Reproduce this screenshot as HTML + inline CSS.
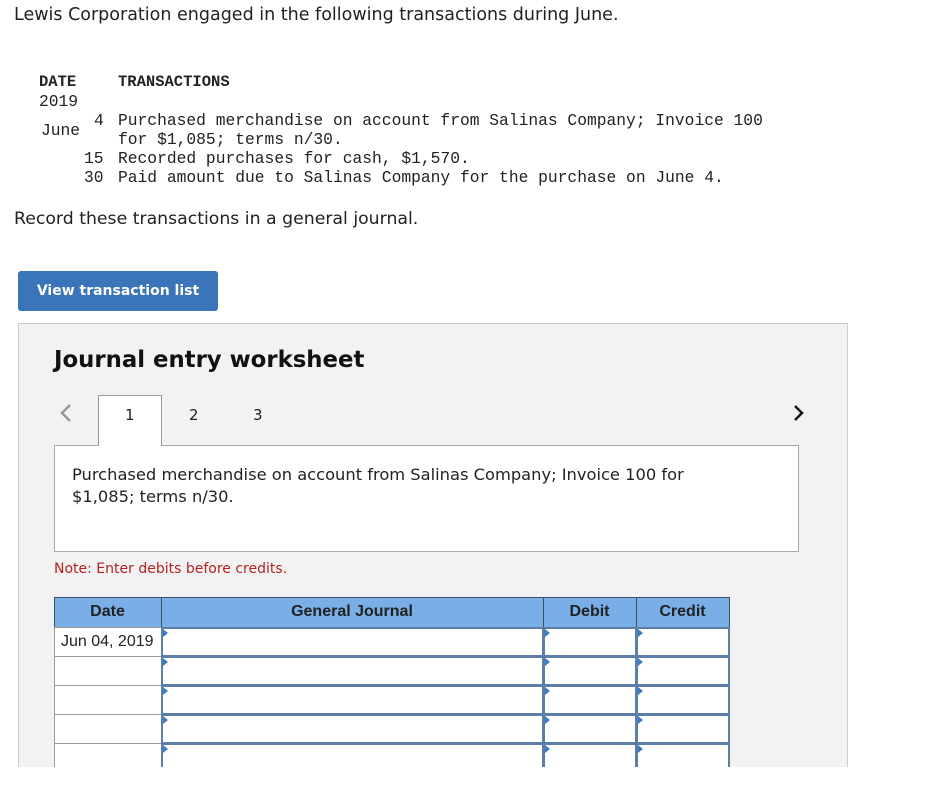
<!DOCTYPE html>
<html><head><meta charset="utf-8"><style>
*{margin:0;padding:0;box-sizing:border-box}
body{width:927px;height:791px;background:#fff;position:relative;overflow:hidden;font-family:"Liberation Sans",sans-serif;color:#222}
.a{position:absolute;white-space:nowrap}
.m{font-family:"Liberation Mono",monospace;font-size:16.3px;color:#222}
.s{font-family:"DejaVu Sans","Liberation Sans",sans-serif}
.cell{position:absolute;background:#fff;border:1px solid #6a8bb0}
.tri{position:absolute;width:0;height:0;border-top:4px solid transparent;border-bottom:4px solid transparent;border-left:5px solid #3d7cc4}
</style></head><body>
<div class="a s" style="left:14px;top:5px;font-size:17.5px">Lewis Corporation engaged in the following transactions during June.</div>
<div class="a m" style="left:39px;top:73px;font-weight:bold;font-size:15.5px">DATE</div>
<div class="a m" style="left:118px;top:73px;font-weight:bold;font-size:15.5px">TRANSACTIONS</div>
<div class="a m" style="left:39px;top:92px">2019</div>
<div class="a m" style="left:41px;top:121px">June</div>
<div class="a m" style="left:94px;top:111px">4</div>
<div class="a m" style="left:118px;top:111px">Purchased merchandise on account from Salinas Company; Invoice 100</div>
<div class="a m" style="left:118px;top:130px">for $1,085; terms n/30.</div>
<div class="a m" style="left:84px;top:149px">15</div>
<div class="a m" style="left:118px;top:149px">Recorded purchases for cash, $1,570.</div>
<div class="a m" style="left:84px;top:168px">30</div>
<div class="a m" style="left:118px;top:168px">Paid amount due to Salinas Company for the purchase on June 4.</div>
<div class="a s" style="left:14px;top:209px;font-size:17.3px">Record these transactions in a general journal.</div>
<div class="a s" style="left:18px;top:271px;width:200px;height:40px;background:#3a74b9;border-radius:3px;color:#fff;font-weight:bold;font-size:14px;line-height:40px;text-align:center">View transaction list</div>
<div class="a" style="left:18px;top:323px;width:830px;height:460px;background:#f2f2f2;border:1px solid #ccc"></div>
<div class="a s" style="left:54px;top:347px;font-size:22.8px;font-weight:bold;color:#111">Journal entry worksheet</div>
<svg class="a" style="left:58px;top:403px" width="16" height="20"><path d="M12 2 L4 10 L12 18" fill="none" stroke="#999" stroke-width="2.5"/></svg>
<svg class="a" style="left:792px;top:403px" width="16" height="20"><path d="M3 3 L10 10 L3 17" fill="none" stroke="#111" stroke-width="2.5"/></svg>
<div class="a" style="left:54px;top:445px;width:745px;height:107px;background:#fff;border:1px solid #aaa"></div>
<div class="a" style="left:98px;top:395px;width:64px;height:51px;background:#fff;border:1px solid #999;border-bottom:none"></div>
<div class="a s" style="left:125px;top:406px;font-size:15px">1</div>
<div class="a s" style="left:189px;top:406px;font-size:15px">2</div>
<div class="a s" style="left:253px;top:406px;font-size:15px">3</div>
<div class="a s" style="left:72px;top:464px;font-size:16.3px;line-height:22px">Purchased merchandise on account from Salinas Company; Invoice 100 for<br>$1,085; terms n/30.</div>
<div class="a s" style="left:54px;top:561px;font-size:14px;color:#b22222">Note: Enter debits before credits.</div>
<div class="a" style="left:54px;top:597px;width:676px;height:31px;background:#79aee6;border:1px solid #3a4f66"></div>
<div class="a" style="left:161px;top:597px;width:1px;height:31px;background:#3a4f66"></div>
<div class="a" style="left:543px;top:597px;width:1px;height:31px;background:#3a4f66"></div>
<div class="a" style="left:636px;top:597px;width:1px;height:31px;background:#3a4f66"></div>
<div class="a" style="left:54px;top:603px;width:107px;text-align:center;font-weight:bold;font-size:16px">Date</div>
<div class="a" style="left:161px;top:603px;width:382px;text-align:center;font-weight:bold;font-size:16px">General Journal</div>
<div class="a" style="left:543px;top:603px;width:93px;text-align:center;font-weight:bold;font-size:16px">Debit</div>
<div class="a" style="left:636px;top:603px;width:93px;text-align:center;font-weight:bold;font-size:16px">Credit</div>
<div id="rows"></div>
<script>
var h='';var tops=[627,656,685,714,743];
tops.forEach(function(t,i){
 h+='<div class="cell" style="left:54px;top:'+t+'px;width:108px;height:30px;border-color:#999"></div>';
 h+='<div class="cell" style="left:161px;top:'+t+'px;width:383px;height:30px;border:2px solid #5b7fa8"></div>';
 h+='<div class="cell" style="left:543px;top:'+t+'px;width:94px;height:30px;border:2px solid #5b7fa8"></div>';
 h+='<div class="cell" style="left:636px;top:'+t+'px;width:94px;height:30px;border:2px solid #5b7fa8"></div>';
 [163,545,638].forEach(function(x){h+='<div class="tri" style="left:'+x+'px;top:'+(t+2)+'px"></div>'});
});
h+='<div class="a" style="left:61px;top:633px;font-size:16px">Jun 04, 2019</div>';
h+='<div class="a" style="left:0;top:767px;width:927px;height:30px;background:#fff"></div>';
document.getElementById('rows').innerHTML=h;
</script>
</body></html>
